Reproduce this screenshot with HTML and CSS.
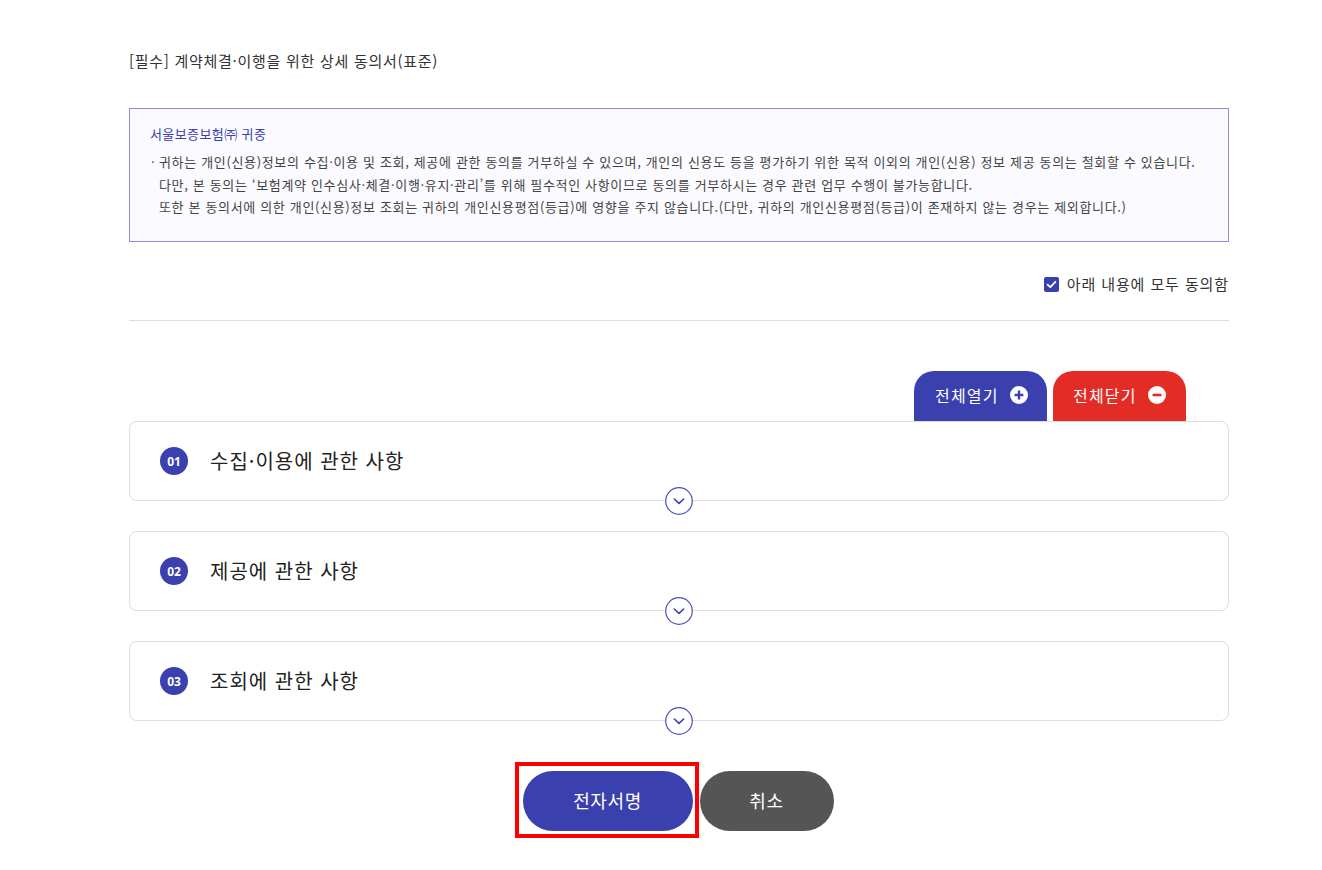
FILE: index.html
```html
<!DOCTYPE html>
<html lang="ko">
<head>
<meta charset="utf-8">
<title>상세 동의서</title>
<link rel="stylesheet" href="styles.css">
</head>
<body>
<main class="page">
  <h1 class="doc-title">[필수] 계약체결·이행을 위한 상세 동의서(표준)</h1>

  <section class="notice">
    <p class="notice-head">서울보증보험㈜ 귀중</p>
    <div class="notice-body">
      <span class="bullet">·</span>
      <div class="notice-lines">
        <p>귀하는 개인(신용)정보의 수집·이용 및 조회, 제공에 관한 동의를 거부하실 수 있으며, 개인의 신용도 등을 평가하기 위한 목적 이외의 개인(신용) 정보 제공 동의는 철회할 수 있습니다.</p>
        <p>다만, 본 동의는 ‘보험계약 인수심사·체결·이행·유지·관리’를 위해 필수적인 사항이므로 동의를 거부하시는 경우 관련 업무 수행이 불가능합니다.</p>
        <p>또한 본 동의서에 의한 개인(신용)정보 조회는 귀하의 개인신용평점(등급)에 영향을 주지 않습니다.(다만, 귀하의 개인신용평점(등급)이 존재하지 않는 경우는 제외합니다.)</p>
      </div>
    </div>
  </section>

  <label class="agree-all">
    <span class="check">
      <svg viewBox="0 0 15 15" width="15" height="15"><path d="M3.6 7.6 L6.3 10.2 L11.4 4.8" fill="none" stroke="#fff" stroke-width="1.8" stroke-linecap="round" stroke-linejoin="round"/></svg>
    </span>
    <span class="agree-text">아래 내용에 모두 동의함</span>
  </label>

  <hr class="divider">

  <div class="tabs">
    <button class="tab tab-open">전체열기
      <svg class="tab-icon" viewBox="0 0 18 18" width="18" height="18"><circle cx="9" cy="9" r="9" fill="#fff"/><path d="M9 4.6 V13.4 M4.6 9 H13.4" stroke="#3a41ae" stroke-width="2.4"/></svg>
    </button>
    <button class="tab tab-close">전체닫기
      <svg class="tab-icon" viewBox="0 0 18 18" width="18" height="18"><circle cx="9" cy="9" r="9" fill="#fff"/><path d="M4.6 9 H13.4" stroke="#e32c25" stroke-width="2.6"/></svg>
    </button>
  </div>

  <div class="acc-list">
    <div class="acc-item">
      <span class="badge">01</span>
      <span class="acc-title">수집·이용에 관한 사항</span>
      <span class="toggle"><svg viewBox="0 0 28 28" width="28" height="28"><circle cx="14" cy="14" r="13.3" fill="#fff" stroke="#4a50c0" stroke-width="1.2"/><path d="M9.3 12 L14 16.4 L18.7 12" fill="none" stroke="#3a41ae" stroke-width="1.6" stroke-linecap="round" stroke-linejoin="round"/></svg></span>
    </div>
    <div class="acc-item">
      <span class="badge">02</span>
      <span class="acc-title">제공에 관한 사항</span>
      <span class="toggle"><svg viewBox="0 0 28 28" width="28" height="28"><circle cx="14" cy="14" r="13.3" fill="#fff" stroke="#4a50c0" stroke-width="1.2"/><path d="M9.3 12 L14 16.4 L18.7 12" fill="none" stroke="#3a41ae" stroke-width="1.6" stroke-linecap="round" stroke-linejoin="round"/></svg></span>
    </div>
    <div class="acc-item">
      <span class="badge">03</span>
      <span class="acc-title">조회에 관한 사항</span>
      <span class="toggle"><svg viewBox="0 0 28 28" width="28" height="28"><circle cx="14" cy="14" r="13.3" fill="#fff" stroke="#4a50c0" stroke-width="1.2"/><path d="M9.3 12 L14 16.4 L18.7 12" fill="none" stroke="#3a41ae" stroke-width="1.6" stroke-linecap="round" stroke-linejoin="round"/></svg></span>
    </div>
  </div>

  <div class="actions">
    <button class="btn btn-sign">전자서명<span class="highlight"></span></button>
    <button class="btn btn-cancel">취소</button>
  </div>
</main>
</body>
</html>
```

FILE: styles.css
```css
* { box-sizing: border-box; }
body {
  margin: 0;
  background: #fff;
  font-family: "Noto Sans CJK KR", "Noto Sans", sans-serif;
  color: #333;
}
.page {
  width: 1100px;
  margin-left: 129px;
  padding-top: 50px;
}
.doc-title {
  margin: 0;
  font-size: 15px;
  font-weight: 400;
  line-height: 22px;
  color: #333;
  letter-spacing: 0.72px;
}
.notice {
  margin-top: 36px;
  border: 1px solid #8a8fdc;
  background: #fafaff;
  padding: 15px 20px 22px 20px;
  height: 134px;
}
.notice p { margin: 0; }
.notice-head {
  font-size: 13px;
  line-height: 20px;
  color: #3a40b0;
  letter-spacing: 0.4px;
}
.notice-body {
  display: flex;
  margin-top: 7px;
  font-size: 13px;
  line-height: 22.5px;
  color: #444;
  letter-spacing: 0.66px;
}
.bullet {
  width: 9px;
  flex: none;
  padding-left: 1px;
}
.agree-all {
  margin-top: 31px;
  display: flex;
  justify-content: flex-end;
  align-items: center;
  gap: 8px;
  height: 22px;
}
.check {
  width: 15px;
  height: 15px;
  background: #3a41ae;
  border-radius: 2px;
  display: flex;
}
.agree-text {
  font-size: 15px;
  color: #333;
  line-height: 22px;
  letter-spacing: 0.9px;
}
.divider {
  margin: 25px 0 0 0;
  border: 0;
  border-top: 1px solid #ddd;
  height: 0;
}
.tabs {
  margin-top: 50px;
  display: flex;
  justify-content: flex-end;
  gap: 6px;
  padding-right: 43px;
}
.tab {
  height: 50px;
  border: 0;
  border-radius: 20px 20px 0 0;
  color: #fff;
  font-family: inherit;
  font-size: 16px;
  letter-spacing: 1.2px;
  display: flex;
  align-items: center;
  justify-content: flex-start;
  padding: 0 0 2px 21px;
  gap: 11px;
}
.tab-open { background: #3a41ae; width: 133px; }
.tab-close { background: #e32c25; width: 133px; padding-left: 20px; }
.tab-icon { flex: none; }
.acc-list {
  display: flex;
  flex-direction: column;
  gap: 30px;
}
.acc-item {
  position: relative;
  height: 80px;
  border: 1px solid #ddd;
  border-radius: 8px;
  display: flex;
  align-items: center;
  padding-left: 30px;
  gap: 22px;
  background: #fff;
}
.badge {
  width: 28px;
  height: 28px;
  border-radius: 50%;
  background: #3a41ae;
  color: #fff;
  font-size: 12px;
  font-weight: 700;
  display: flex;
  align-items: center;
  justify-content: center;
  font-family: "Noto Sans", sans-serif;
}
.acc-title {
  font-size: 20px;
  color: #222;
  line-height: 28px;
  letter-spacing: 1px;
}
.toggle {
  position: absolute;
  left: 50%;
  bottom: -15px;
  margin-left: -14px;
  width: 28px;
  height: 28px;
  display: flex;
}
.actions {
  margin-top: 50px;
  display: flex;
  justify-content: center;
  gap: 7px;
  padding: 0 2px 40px 0;
}
.btn {
  height: 60px;
  border: 0;
  border-radius: 30px;
  color: #fff;
  font-family: inherit;
  font-size: 18px;
  letter-spacing: 0.6px;
  padding: 0 0 2px 0;
}
.btn-sign {
  position: relative;
  width: 170px;
  background: #3a41ae;
}
.btn-cancel {
  width: 134px;
  background: #555;
}
.highlight {
  position: absolute;
  left: -8px;
  top: -9px;
  width: 184px;
  height: 76px;
  border: 4px solid #f00;
  pointer-events: none;
}
```
